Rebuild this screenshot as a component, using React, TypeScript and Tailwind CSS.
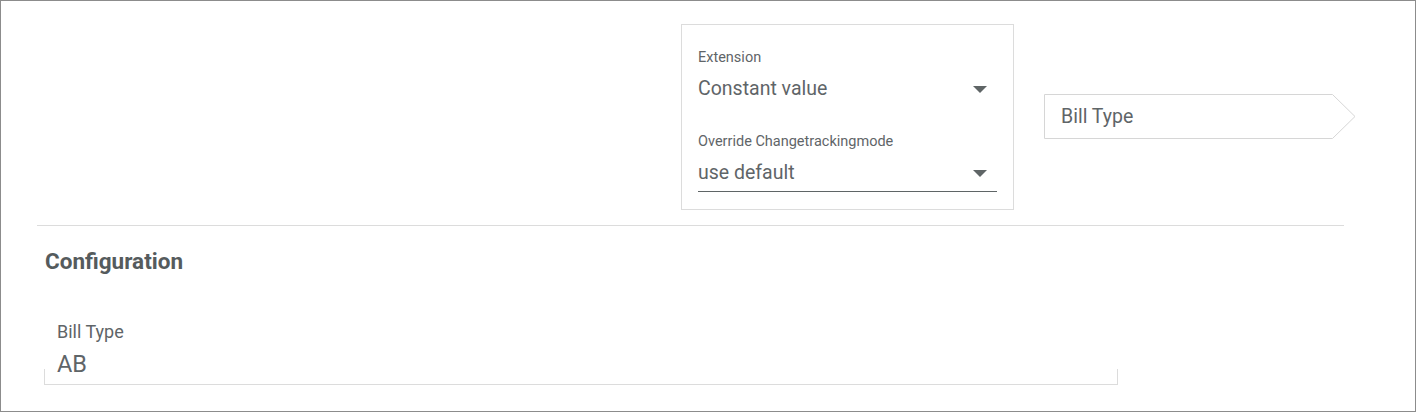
import React from "react";

const Caret = () => (
  <svg width="14" height="7" viewBox="0 0 14 7" className="shrink-0">
    <polygon points="0,0 14,0 7,7" fill="#5f6566" />
  </svg>
);

export default function App() {
  return (
    <div
      className="w-[1416px] h-[412px] box-border border border-[#8c8c8c] bg-white overflow-hidden text-[#5f6568]"
      style={{ fontFamily: "Roboto, 'Liberation Sans', sans-serif" }}
    >
      <div className="flex items-start pt-[23px] pl-[680px]">
        <div className="w-[333px] h-[186px] box-border border border-[#dcdcdc] pt-[25px] px-[16px]">
          <div className="text-[14.5px] leading-[16px]">Extension</div>
          <div className="mt-[11px] flex items-center justify-between pr-[10px] h-[24px]">
            <span className="text-[19.5px] leading-[24px]">Constant value</span>
            <Caret />
          </div>
          <div className="mt-[33px] text-[14.5px] leading-[16px]">Override Changetrackingmode</div>
          <div className="mt-[11px] flex items-center justify-between pr-[10px] pb-[6px] border-b border-[#5f6566]">
            <span className="text-[19.5px] leading-[24px]">use default</span>
            <Caret />
          </div>
        </div>
        <div className="relative ml-[30px] mt-[70px] w-[312px] h-[45px]">
          <svg width="312" height="45" viewBox="0 0 312 45" className="absolute inset-0">
            <polygon
              points="0.5,0.5 288.5,0.5 311,22.5 288.5,44.5 0.5,44.5"
              fill="white"
              stroke="#d6d6d6"
              strokeWidth="1"
            />
          </svg>
          <div className="relative h-full flex items-center pl-[17px] text-[19.5px]">Bill Type</div>
        </div>
      </div>
      <div className="ml-[36px] mt-[15px] w-[1307px] border-t border-[#dcdcdc]" />
      <div className="ml-[44px] mt-[21px] text-[22.5px] leading-[28px] font-bold text-[#555b5d]">
        Configuration
      </div>
      <div className="relative ml-[43px] mt-[47px] w-[1074px] border-b border-[#dcdcdc] pl-[13px] pb-[6px]">
        <div className="text-[18px] leading-[20px]">Bill Type</div>
        <div className="mt-[8px] text-[23.5px] leading-[28px]">AB</div>
        <span className="absolute left-0 bottom-0 w-px h-[15px] bg-[#dcdcdc]" />
        <span className="absolute right-0 bottom-0 w-px h-[15px] bg-[#dcdcdc]" />
      </div>
    </div>
  );
}
